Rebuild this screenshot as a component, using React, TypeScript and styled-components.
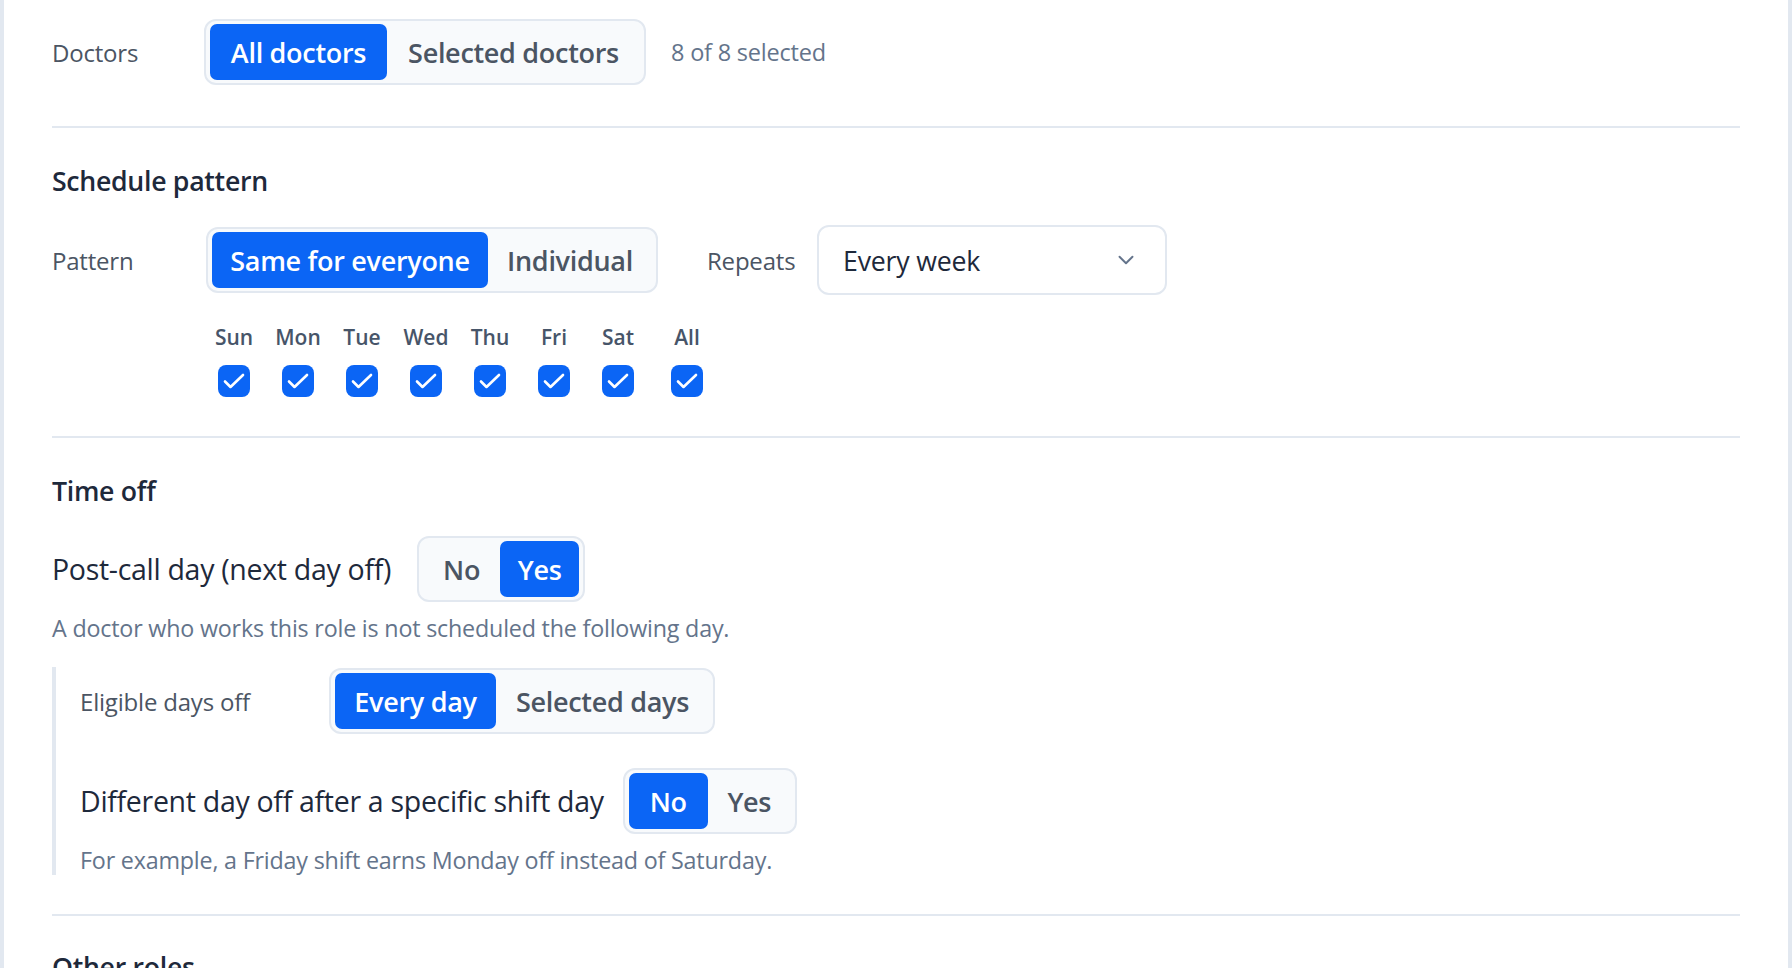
import React from "react";
import styled, { createGlobalStyle } from "styled-components";

const Global = createGlobalStyle`
  html, body { margin: 0; padding: 0; background: #ffffff; }
  body { font-family: "Open Sans", "Noto Sans", Arial, sans-serif; color: #1e293b; }
  * { box-sizing: border-box; }
`;

const Page = styled.div`
  width: 1792px;
  height: 968px;
  overflow: hidden;
  background: #ffffff;
  border-left: 4px solid #e2e8f0;
  border-right: 4px solid #e2e8f0;
  padding: 19px 48px 0 48px;
`;

const Row = styled.div<{ $gap?: number }>`
  display: flex;
  align-items: center;
  gap: ${(p) => p.$gap ?? 0}px;
`;

const Label = styled.div<{ $w: number }>`
  width: ${(p) => p.$w}px;
  flex: none;
  font-size: 24px;
  font-weight: 500;
  color: #4b5563;
  letter-spacing: -0.2px;
`;

const Segmented = styled.div`
  display: inline-flex;
  align-items: center;
  height: 66px;
  padding: 3px 4px;
  border: 2px solid #e2e8f0;
  border-radius: 12px;
  background: #f8fafc;
  flex: none;
`;

const SegButton = styled.button<{ $active?: boolean; $w: number }>`
  height: 56px;
  width: ${(p) => p.$w}px;
  border: none;
  border-radius: 7px;
  padding: 0;
  font-family: inherit;
  font-size: 27px;
  font-weight: 600;
  letter-spacing: -0.3px;
  background: ${(p) => (p.$active ? "#0b65f5" : "transparent")};
  color: ${(p) => (p.$active ? "#ffffff" : "#4b5563")};
  display: flex;
  align-items: center;
  justify-content: center;
  cursor: pointer;
`;

const Meta = styled.span`
  font-size: 23.5px;
  color: #64748b;
  letter-spacing: -0.2px;
`;

const Divider = styled.hr<{ $top: number; $bottom: number }>`
  border: none;
  height: 2px;
  background: #e2e8f0;
  margin: ${(p) => p.$top}px 0 ${(p) => p.$bottom}px 0;
`;

const Heading = styled.h2<{ $mb: number }>`
  margin: 0 0 ${(p) => p.$mb}px 0;
  font-size: 26.7px;
  line-height: 34px;
  font-weight: 600;
  color: #1e293b;
  letter-spacing: -0.3px;
`;

const Select = styled.div`
  width: 350px;
  height: 70px;
  border: 2px solid #e2e8f0;
  border-radius: 12px;
  background: #ffffff;
  display: flex;
  align-items: center;
  justify-content: space-between;
  padding: 0 26px 0 24px;
  font-size: 26.7px;
  color: #1e293b;
  letter-spacing: -0.2px;
`;

const Chevron = styled.svg`
  width: 26px;
  height: 26px;
  color: #64748b;
`;

const Days = styled.div`
  display: grid;
  grid-template-columns: repeat(7, 56px) 60px;
  column-gap: 8px;
  row-gap: 15px;
  margin: 29px 0 0 154px;
  justify-items: center;
`;

const DayName = styled.div<{ $shift?: number }>`
  font-size: 21px;
  line-height: 26px;
  font-weight: 600;
  color: #475569;
  margin-left: ${(p) => p.$shift ?? 0}px;
`;

const Check = styled.div<{ $shift?: number }>`
  width: 32px;
  height: 32px;
  border-radius: 8px;
  background: #0b65f5;
  display: flex;
  align-items: center;
  justify-content: center;
  margin-left: ${(p) => p.$shift ?? 0}px;
`;

const ToggleLabel = styled.div`
  font-size: 28.5px;
  font-weight: 500;
  color: #1e293b;
  letter-spacing: -0.3px;
`;

const Help = styled.p<{ $mt: number }>`
  margin: ${(p) => p.$mt}px 0 0 0;
  font-size: 23.3px;
  line-height: 30px;
  color: #64748b;
  letter-spacing: -0.2px;
`;

const SubPanel = styled.div`
  margin-top: 24px;
  border-left: 4px solid #e2e8f0;
  padding: 1px 0 0 24px;
  display: flex;
  flex-direction: column;
`;

const Spacer = styled.div<{ $h: number }>`
  height: ${(p) => p.$h}px;
`;

const CheckIcon = () => (
  <svg width="32" height="32" viewBox="0 0 32 32" fill="none" stroke="#ffffff" strokeWidth="2.6" strokeLinecap="round" strokeLinejoin="round">
    <path d="M7 16.5l5.5 5.5L25 10" />
  </svg>
);

const days = ["Sun", "Mon", "Tue", "Wed", "Thu", "Fri", "Sat", "All"];

export default function App() {
  return (
    <>
      <Global />
      <Page>
        <Row>
          <Label $w={152}>Doctors</Label>
          <Segmented>
            <SegButton $active $w={177}>All doctors</SegButton>
            <SegButton $w={253}>Selected doctors</SegButton>
          </Segmented>
          <Meta style={{ marginLeft: 25 }}>8 of 8 selected</Meta>
        </Row>

        <Divider $top={41} $bottom={36} />

        <Heading $mb={27}>Schedule pattern</Heading>
        <Row>
          <Label $w={154}>Pattern</Label>
          <Segmented>
            <SegButton $active $w={276}>Same for everyone</SegButton>
            <SegButton $w={164}>Individual</SegButton>
          </Segmented>
          <Label $w={110} style={{ marginLeft: 49 }}>Repeats</Label>
          <Select>
            <span>Every week</span>
            <Chevron viewBox="0 0 24 24" fill="none" stroke="currentColor" strokeWidth="1.8" strokeLinecap="round" strokeLinejoin="round">
              <path d="M6 9l6 6 6-6" />
            </Chevron>
          </Select>
        </Row>

        <Days>
          {days.map((d, i) => (
            <DayName key={d} $shift={i === 7 ? 6 : 0}>{d}</DayName>
          ))}
          {days.map((d, i) => (
            <Check key={d + "c"} $shift={i === 7 ? 6 : 0}>
              <CheckIcon />
            </Check>
          ))}
        </Days>

        <Divider $top={39} $bottom={36} />

        <Heading $mb={28}>Time off</Heading>
        <Row $gap={26}>
          <ToggleLabel>Post-call day (next day off)</ToggleLabel>
          <Segmented>
            <SegButton $w={77}>No</SegButton>
            <SegButton $active $w={79}>Yes</SegButton>
          </Segmented>
        </Row>
        <Help $mt={11}>A doctor who works this role is not scheduled the following day.</Help>

        <SubPanel>
          <Row>
            <Label $w={249}>Eligible days off</Label>
            <Segmented>
              <SegButton $active $w={161}>Every day</SegButton>
              <SegButton $w={213}>Selected days</SegButton>
            </Segmented>
          </Row>
          <Spacer $h={34} />
          <Row $gap={19}>
            <ToggleLabel>Different day off after a specific shift day</ToggleLabel>
            <Segmented>
              <SegButton $active $w={79}>No</SegButton>
              <SegButton $w={83}>Yes</SegButton>
            </Segmented>
          </Row>
          <Help $mt={11}>For example, a Friday shift earns Monday off instead of Saturday.</Help>
        </SubPanel>

        <Divider $top={39} $bottom={34} />

        <Heading $mb={0}>Other roles</Heading>
      </Page>
    </>
  );
}
